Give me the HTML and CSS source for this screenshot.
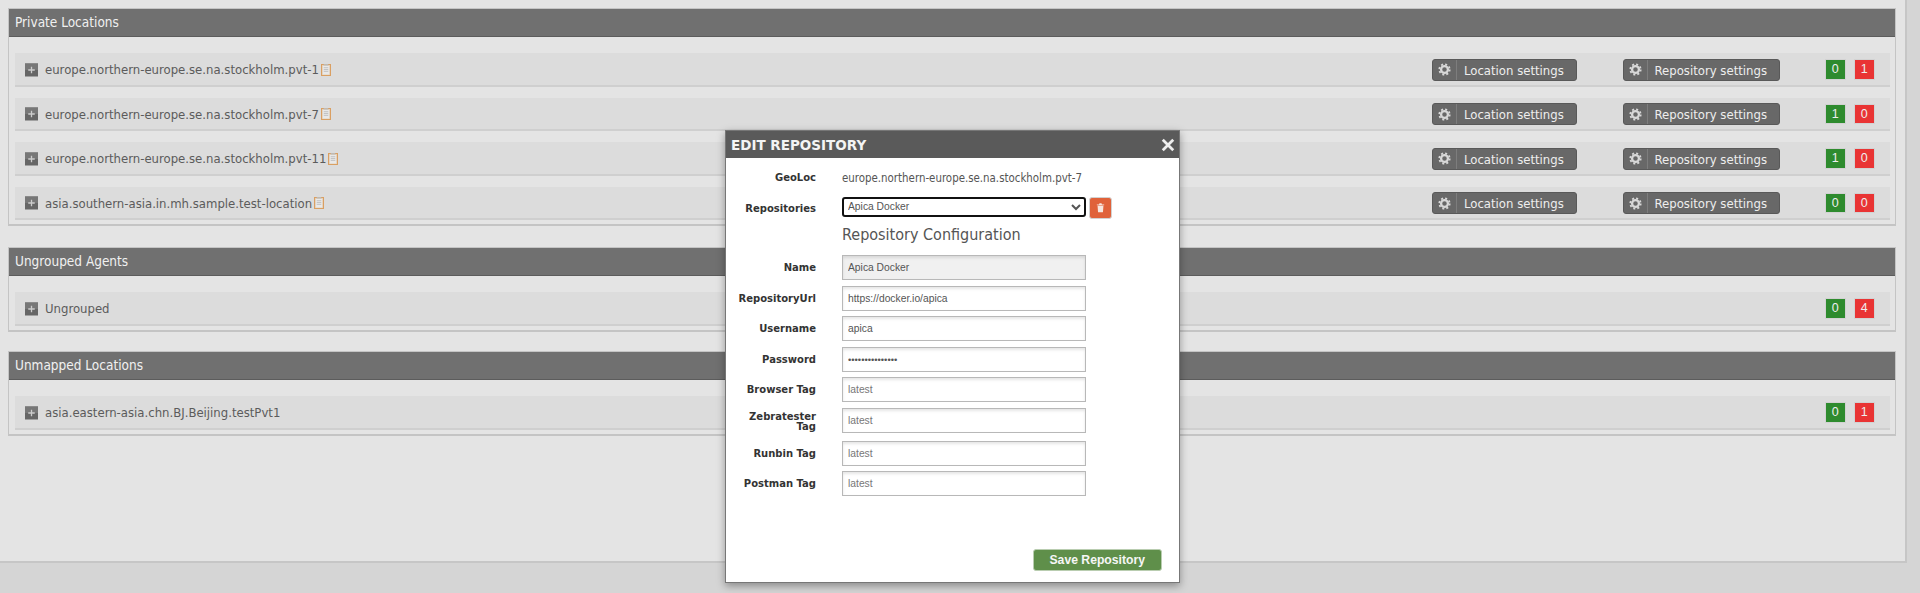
FILE: index.html
```html
<!DOCTYPE html>
<html lang="en">
<head>
  <meta charset="UTF-8" />
  <meta name="viewport" content="width=device-width, initial-scale=1" />
  <title>Edit Repository</title>
  <link rel="stylesheet" href="styles.css">
</head>
<body>

  <svg class="icon-defs" width="0" height="0">
    <symbol id="gear" viewBox="0 0 16 16">
      <circle cx="8" cy="8" r="4.2" fill="none" stroke="currentColor" stroke-width="2.8" />
      <circle cx="8" cy="8" r="6.4" fill="none" stroke="currentColor" stroke-width="2.2" stroke-dasharray="2.5 2.53" />
    </symbol>
    <symbol id="plus" viewBox="0 0 14 14">
      <rect width="14" height="14" fill="#666" />
      <rect width="14" height="7" fill="#777" />
      <path d="M7 3.5v7M3.5 7h7" stroke="#ccc" stroke-width="1.4" />
    </symbol>
    <symbol id="clip" viewBox="0 0 11 13">
      <rect x="0.5" y="0.5" width="10" height="12" fill="#e3d0b8" stroke="#d99a58" />
      <rect x="2" y="2" width="7" height="9.5" fill="#e9e9e9" />
      <path d="M3 4h5M3 6h5M3 8h5" stroke="#b8b8b8" stroke-width="0.9" />
      <rect x="3" y="0" width="5" height="1.6" fill="#bdbdbd" />
    </symbol>
  </svg>

  <div class="page">

    <section class="group">
      <h3 class="group-title">Private Locations</h3>
      <div class="group-body">
        <div class="loc-row">
          <svg class="plus"><use href="#plus" /></svg>
          <span class="loc-name">europe.northern-europe.se.na.stockholm.pvt-1</span>
          <svg class="clip"><use href="#clip" /></svg>
          <a class="btn btn-location"><span class="btn-icon"><svg class="gear"><use href="#gear" /></svg></span>Location settings</a>
          <a class="btn btn-repo"><span class="btn-icon"><svg class="gear"><use href="#gear" /></svg></span>Repository settings</a>
          <span class="count ok">0</span>
          <span class="count bad">1</span>
        </div>
        <div class="loc-row">
          <svg class="plus"><use href="#plus" /></svg>
          <span class="loc-name">europe.northern-europe.se.na.stockholm.pvt-7</span>
          <svg class="clip"><use href="#clip" /></svg>
          <a class="btn btn-location"><span class="btn-icon"><svg class="gear"><use href="#gear" /></svg></span>Location settings</a>
          <a class="btn btn-repo"><span class="btn-icon"><svg class="gear"><use href="#gear" /></svg></span>Repository settings</a>
          <span class="count ok">1</span>
          <span class="count bad">0</span>
        </div>
        <div class="loc-row">
          <svg class="plus"><use href="#plus" /></svg>
          <span class="loc-name">europe.northern-europe.se.na.stockholm.pvt-11</span>
          <svg class="clip"><use href="#clip" /></svg>
          <a class="btn btn-location"><span class="btn-icon"><svg class="gear"><use href="#gear" /></svg></span>Location settings</a>
          <a class="btn btn-repo"><span class="btn-icon"><svg class="gear"><use href="#gear" /></svg></span>Repository settings</a>
          <span class="count ok">1</span>
          <span class="count bad">0</span>
        </div>
        <div class="loc-row">
          <svg class="plus"><use href="#plus" /></svg>
          <span class="loc-name">asia.southern-asia.in.mh.sample.test-location</span>
          <svg class="clip"><use href="#clip" /></svg>
          <a class="btn btn-location"><span class="btn-icon"><svg class="gear"><use href="#gear" /></svg></span>Location settings</a>
          <a class="btn btn-repo"><span class="btn-icon"><svg class="gear"><use href="#gear" /></svg></span>Repository settings</a>
          <span class="count ok">0</span>
          <span class="count bad">0</span>
        </div>
      </div>
    </section>

    <section class="group">
      <h3 class="group-title">Ungrouped Agents</h3>
      <div class="group-body">
        <div class="loc-row">
          <svg class="plus"><use href="#plus" /></svg>
          <span class="loc-name">Ungrouped</span>
          <span class="count ok first">0</span>
          <span class="count bad">4</span>
        </div>
      </div>
    </section>

    <section class="group">
      <h3 class="group-title">Unmapped Locations</h3>
      <div class="group-body">
        <div class="loc-row">
          <svg class="plus"><use href="#plus" /></svg>
          <span class="loc-name">asia.eastern-asia.chn.BJ.Beijing.testPvt1</span>
          <span class="count ok first">0</span>
          <span class="count bad">1</span>
        </div>
      </div>
    </section>

  </div>

  <!-- Edit repository dialog -->
  <div class="modal">
    <div class="modal-head">
      <span>EDIT REPOSITORY</span>
      <svg class="modal-close" viewBox="0 0 12 12"><path d="M1.5 1.5l9 9M10.5 1.5l-9 9" /></svg>
    </div>
    <form class="modal-body">
      <div class="form-row geo-row">
        <label>GeoLoc</label>
        <span class="geo-value">europe.northern-europe.se.na.stockholm.pvt-7</span>
      </div>
      <div class="form-row repo-row">
        <label>Repositories</label>
        <select class="repo-select"><option>Apica Docker</option></select>
        <button type="button" class="trash-btn">
          <svg viewBox="0 0 12 12"><path d="M2 2.6h8v1H2zM4.4 2.6l.5-1.2h2.2l.5 1.2zM2.8 4.2h6.4l-.5 6.6a.6.6 0 0 1-.6.5H3.900a.6.6 0 0 1-.6-.5z" /></svg>
        </button>
      </div>
      <h4 class="config-title">Repository Configuration</h4>
      <div class="form-row"><label>Name</label><input type="text" value="Apica Docker" disabled /></div>
      <div class="form-row"><label>RepositoryUrl</label><input type="text" value="https://docker.io/apica" /></div>
      <div class="form-row"><label>Username</label><input type="text" value="apica" /></div>
      <div class="form-row"><label>Password</label><input type="password" value="apicapassword12" /></div>
      <div class="form-row"><label>Browser Tag</label><input type="text" placeholder="latest" /></div>
      <div class="form-row tall-row"><label>Zebratester Tag</label><input type="text" placeholder="latest" /></div>
      <div class="form-row"><label>Runbin Tag</label><input type="text" placeholder="latest" /></div>
      <div class="form-row"><label>Postman Tag</label><input type="text" placeholder="latest" /></div>
      <div class="form-actions">
        <button type="button" class="save-btn">Save Repository</button>
      </div>
    </form>
  </div>

</body>
</html>
```

FILE: styles.css
```css
* {
  box-sizing: border-box;
}
html, body {
  height: 100%;
}
body {
  margin: 0;
  background: #d5d5d5;
  font-family: "DejaVu Sans", sans-serif;
  overflow: hidden;
}
.icon-defs {
  position: absolute;
}
.page {
  width: 1907px;
  height: 563px;
  padding: 8px 9px 0 8px;
  background: #e4e4e4;
  border-right: 2px solid #c6c6c6;
  border-bottom: 2px solid #c6c6c6;
}

/* Location groups */
.group {
  margin-bottom: 19.5px;
  border: 1px solid #c4c4c4;
  border-bottom-width: 2px;
}
.group:first-child {
  margin-bottom: 21px;
}
.group-title {
  margin: 0;
  height: 28px;
  padding-left: 6px;
  background: #707070;
  border-bottom: 1px solid #5c5c5c;
  color: #f0f0f0;
  font-family: "DejaVu Sans", sans-serif;
  font-stretch: condensed;
  font-size: 13.5px;
  font-weight: 400;
  line-height: 27px;
}
.group-body {
  padding: 16px 5px 4px 6px;
}
.loc-row {
  display: flex;
  align-items: center;
  height: 33.5px;
  margin-bottom: 11px;
  padding: 2px 15.5px 0 10px;
  background: #dcdcdc;
  border-bottom: 2px solid #cfcfcf;
}
.loc-row:last-child {
  margin-bottom: 0;
}
.plus {
  flex: none;
  width: 13px;
  height: 14px;
  margin-right: 7px;
}
.loc-name {
  color: #5b5b5b;
  font-family: "DejaVu Sans", sans-serif;
  font-stretch: condensed;
  font-size: 13px;
}
.clip {
  flex: none;
  width: 10px;
  height: 12px;
  margin-left: 2px;
}

/* Row buttons */
.btn {
  display: flex;
  align-items: center;
  height: 22px;
  padding-top: 1px;
  background: #686868;
  border: 1px solid #595959;
  border-radius: 3px;
  color: #eee;
  font-family: "DejaVu Sans", sans-serif;
  font-stretch: condensed;
  font-size: 13px;
}
.btn-location {
  width: 145px;
  margin-left: auto;
}
.btn-repo {
  width: 157px;
  margin-left: 45.5px;
}
.btn-icon {
  display: flex;
  align-items: center;
  justify-content: center;
  width: 24px;
  height: 20px;
  margin-top: -1px;
  margin-right: 7px;
  border-right: 1px solid #7d7d7d;
}
.gear {
  width: 13px;
  height: 13px;
  color: #d8d8d8;
}
.count {
  flex: none;
  align-self: flex-start;
  width: 20.5px;
  height: 20.5px;
  margin-top: 4px;
  margin-left: 8.5px;
  border: 1px solid #d2d2d2;
  color: #eee;
  font-family: "Liberation Sans", sans-serif;
  font-size: 12.5px;
  line-height: 18px;
  text-align: center;
}
.count.ok {
  margin-left: 45.5px;
  background: #2e8b2e;
}
.count.ok.first {
  margin-left: auto;
}
.count.bad {
  background: #e93434;
}

/* Dialog, sits over the page */
.modal {
  position: absolute;
  left: 725px;
  top: 130px;
  width: 454.5px;
  height: 453px;
  background: #fff;
  border: 1px solid #777;
  box-shadow: 0 3px 8px rgba(0, 0, 0, 0.35);
}
.modal-head {
  display: flex;
  align-items: center;
  justify-content: space-between;
  height: 27px;
  padding: 0 4px 0 5px;
  background: #5a5a5a;
  color: #f4f4f4;
  font-family: "DejaVu Sans", sans-serif;
  font-size: 13.5px;
  font-weight: 700;
}
.modal-close {
  width: 14px;
  height: 14px;
  stroke: #eee;
  stroke-width: 2.4;
  fill: none;
}
.form-row {
  display: flex;
  align-items: center;
  height: 25px;
  margin-bottom: 5.5px;
}
.form-row label {
  flex: none;
  width: 80px;
  margin-left: 10px;
  margin-right: 26px;
  padding-top: 2px;
  color: #333;
  font-family: "DejaVu Sans", sans-serif;
  font-size: 10px;
  font-weight: 700;
  line-height: 10.5px;
  text-align: right;
}
.form-row input {
  width: 243.5px;
  height: 25px;
  padding: 0 5px;
  background: #fff;
  border: 1px solid #b8b8b8;
  box-shadow: inset 0 2px 3px rgba(0, 0, 0, 0.1);
  color: #555;
  font-family: "Liberation Sans", sans-serif;
  font-size: 10.3px;
}
.form-row input[type="password"] {
  font-size: 9.4px;
}
.form-row input:disabled {
  background: #f0f0f0;
}
.form-row input::placeholder {
  color: #777;
}
.geo-row {
  margin-top: 7px;
  margin-bottom: 6px;
}
.geo-value {
  color: #555;
  font-family: "DejaVu Sans", sans-serif;
  font-stretch: condensed;
  font-size: 11.4px;
}
.repo-row {
  margin-bottom: 0;
}
.repo-select {
  align-self: flex-start;
  width: 243.5px;
  height: 20.5px;
  margin-top: 0.5px;
  padding: 0;
  background: #fff;
  border: 2px solid #111;
  border-radius: 3px;
  color: #555;
  font-family: "Liberation Sans", sans-serif;
  font-size: 10.3px;
}
.trash-btn {
  display: flex;
  align-items: center;
  justify-content: center;
  align-self: flex-start;
  width: 22.5px;
  height: 22px;
  margin-top: 0.5px;
  margin-left: 3.5px;
  padding: 0;
  background: #e0623a;
  border: 1px solid #d2d2d2;
  border-radius: 3px;
}
.trash-btn svg {
  width: 11px;
  height: 11px;
  fill: #f6e6df;
}
.config-title {
  margin: 1.5px 0 9.5px 116px;
  height: 23px;
  color: #555;
  font-family: "DejaVu Sans", sans-serif;
  font-stretch: condensed;
  font-size: 16px;
  font-weight: 400;
  line-height: 23px;
}
.tall-row {
  height: 27px;
  margin-bottom: 6px;
}
.tall-row input {
  align-self: flex-start;
}
.form-actions {
  display: flex;
  justify-content: flex-end;
  margin-top: 53px;
  padding-right: 17px;
}
.save-btn {
  width: 128.5px;
  height: 22px;
  padding: 0;
  background: #5f8f4a;
  border: 1px solid #b9cdb0;
  border-radius: 3px;
  color: #f6f6f6;
  font-family: "Liberation Sans", sans-serif;
  font-size: 12.2px;
  font-weight: 700;
}
```
